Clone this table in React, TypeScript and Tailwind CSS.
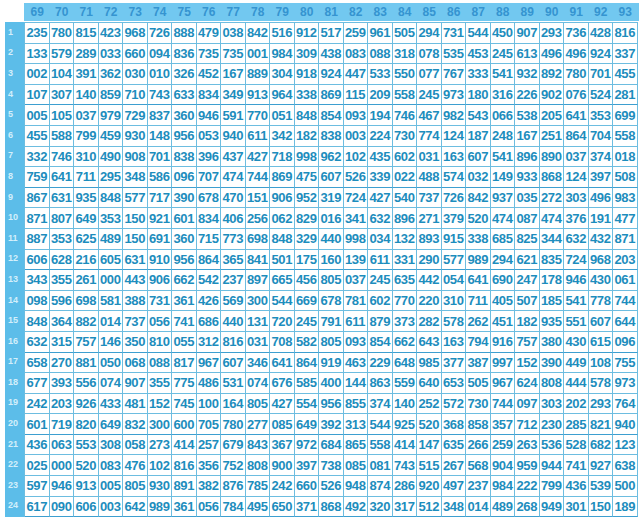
import React from 'react';

const cols = Array.from({ length: 25 }, (_, i) => 69 + i);

const rows = [
  '235 780 815 423 968 726 888 479 038 842 516 912 517 259 961 505 294 731 544 450 907 293 736 428 816',
  '133 579 289 033 660 094 836 735 735 001 984 309 438 083 088 318 078 535 453 245 613 496 496 924 337',
  '002 104 391 362 030 010 326 452 167 889 304 918 924 447 533 550 077 767 333 541 932 892 780 701 455',
  '107 307 140 859 710 743 633 834 349 913 964 338 869 115 209 558 245 973 180 316 226 902 076 524 281',
  '005 105 037 979 729 837 360 946 591 770 051 848 854 093 194 746 467 982 543 066 538 205 641 353 699',
  '455 588 799 459 930 148 956 053 940 611 342 182 838 003 224 730 774 124 187 248 167 251 864 704 558',
  '332 746 310 490 908 701 838 396 437 427 718 998 962 102 435 602 031 163 607 541 896 890 037 374 018',
  '759 641 711 295 348 586 096 707 474 744 869 475 607 526 339 022 488 574 032 149 933 868 124 397 508',
  '867 631 935 848 577 717 390 678 470 151 906 952 319 724 427 540 737 726 842 937 035 272 303 496 983',
  '871 807 649 353 150 921 601 834 406 256 062 829 016 341 632 896 271 379 520 474 087 474 376 191 477',
  '887 353 625 489 150 691 360 715 773 698 848 329 440 998 034 132 893 915 338 685 825 344 632 432 871',
  '606 628 216 605 631 910 956 864 365 841 501 175 160 139 611 331 290 577 989 294 621 835 724 968 203',
  '343 355 261 000 443 906 662 542 237 897 665 456 805 037 245 635 442 054 641 690 247 178 946 430 061',
  '098 596 698 581 388 731 361 426 569 300 544 669 678 781 602 770 220 310 711 405 507 185 541 778 744',
  '848 364 882 014 737 056 741 686 440 131 720 245 791 611 879 373 282 578 262 451 182 935 551 607 644',
  '632 315 757 146 350 810 055 312 816 031 708 582 805 093 854 662 643 163 794 916 757 380 430 615 096',
  '658 270 881 050 068 088 817 967 607 346 641 864 919 463 229 648 985 377 387 997 152 390 449 108 755',
  '677 393 556 074 907 355 775 486 531 074 676 585 400 144 863 559 640 653 505 967 624 808 444 578 973',
  '242 203 926 433 481 152 745 100 164 805 427 554 956 855 374 140 252 572 730 744 097 303 202 293 764',
  '601 719 820 649 832 300 600 705 780 277 085 649 392 313 544 925 520 368 858 357 712 230 285 821 940',
  '436 063 553 308 058 273 414 257 679 843 367 972 684 865 558 414 147 635 266 259 263 536 528 682 123',
  '025 000 520 083 476 102 816 356 752 808 900 397 738 085 081 743 515 267 568 904 959 944 741 927 638',
  '597 946 913 005 805 930 891 382 876 785 242 660 526 948 874 286 920 497 237 984 222 799 436 539 500',
  '617 090 606 003 642 989 361 056 784 495 650 371 868 492 320 317 512 348 014 489 268 949 301 150 189',
].map((r) => r.split(' '));

export default function App() {
  return (
    <div
      className="w-[639px] h-[522px] bg-white pl-[5px] pt-[3px] overflow-hidden"
      style={{ fontFamily: '"Liberation Sans", Arial, sans-serif' }}
    >
      {/* column header */}
      <div className="ml-[19px] h-[18px] bg-[#72c8f0] flex">
        {cols.map((c) => (
          <div
            key={c}
            className="w-[24.5px] shrink-0 flex items-center justify-center pl-[2px] text-[12px] font-semibold text-[#3594d0] leading-none"
          >
            {c}
          </div>
        ))}
      </div>

      <div className="mt-px flex">
        {/* row numbers */}
        <div className="w-[19px] shrink-0 bg-[#5cbde9]">
          {rows.map((_, i) => (
            <div
              key={i}
              className="h-[20.6px] flex items-center pl-[3px] text-[9px] font-bold text-[#d3effb] leading-none"
            >
              {i + 1}
            </div>
          ))}
        </div>

        {/* number grid */}
        <div className="border-l border-t border-[#6dbde0]">
          {rows.map((r, i) => (
            <div key={i} className="flex">
              {r.map((n, j) => (
                <div
                  key={j}
                  className={
                    (i + 1) % 4 === 0
                      ? 'w-[24.5px] h-[20.6px] shrink-0 border-r border-b border-r-[#6dbde0] border-b-[#3d9fd0] flex items-center justify-center text-[13px] tracking-[-0.4px] font-bold text-[#1d8dbd] leading-none'
                      : 'w-[24.5px] h-[20.6px] shrink-0 border-r border-b border-[#6dbde0] flex items-center justify-center text-[13px] tracking-[-0.4px] font-bold text-[#1d8dbd] leading-none'
                  }
                >
                  {n}
                </div>
              ))}
            </div>
          ))}
        </div>
      </div>
    </div>
  );
}
